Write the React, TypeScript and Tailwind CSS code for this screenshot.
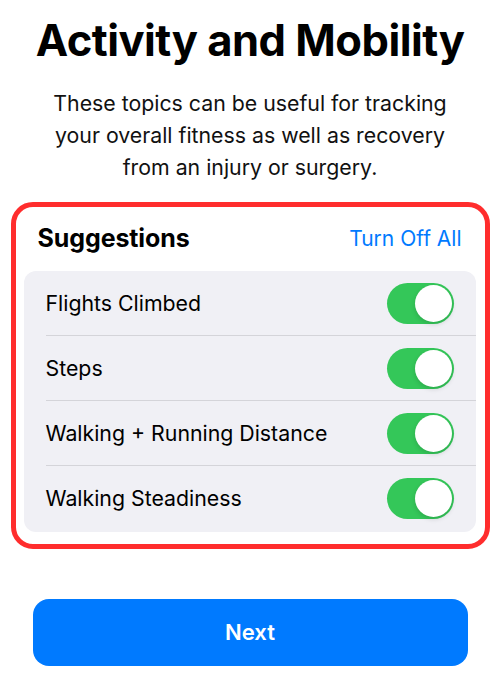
import React from "react";

const topics = [
  "Flights Climbed",
  "Steps",
  "Walking + Running Distance",
  "Walking Steadiness",
];

function Toggle() {
  return (
    <div className="w-[67px] h-[41px] rounded-full bg-[#34c759] flex items-center justify-end pr-[2px]">
      <div className="w-[37px] h-[37px] rounded-full bg-white shadow-[0_2px_5px_rgba(0,0,0,0.15)]" />
    </div>
  );
}

export default function App() {
  return (
    <div
      className="w-[500px] h-[697px] bg-white flex flex-col items-center text-black overflow-hidden"
      style={{ fontFamily: "Inter, 'Noto Sans', sans-serif" }}
    >
      <h1 className="mt-[12px] text-[43.5px] leading-[56px] font-bold tracking-[-0.5px]">
        Activity and Mobility
      </h1>
      <p className="mt-[19px] text-[21.3px] leading-[32px] text-center text-[#111]">
        These topics can be useful for tracking
        <br />
        your overall fitness as well as recovery
        <br />
        from an injury or surgery.
      </p>

      <div className="mt-[19px] w-[479px] border-[5px] border-[#ff2d2d] rounded-[22px] pl-[8px] pr-[9px] pb-[12px]">
        <div className="h-[64px] flex items-center justify-between pl-[14px] pr-[14px]">
          <span className="text-[25px] font-bold tracking-[-0.1px]">Suggestions</span>
          <span className="text-[21px] text-[#007aff]">Turn Off All</span>
        </div>
        <div className="bg-[#f0f0f5] rounded-[12px] pb-[1px]">
          {topics.map((t, i) => (
            <div key={t} className="pl-[22px]">
              <div
                className={
                  "h-[65px] flex items-center justify-between pr-[22px] " +
                  (i < topics.length - 1 ? "border-b border-[#d4d4d9]" : "")
                }
              >
                <span className="text-[21.3px] pt-[1px]">{t}</span>
                <Toggle />
              </div>
            </div>
          ))}
        </div>
      </div>

      <button className="mt-[50px] w-[435px] h-[67px] rounded-[16px] bg-[#007aff] text-white text-[22px] font-semibold">
        Next
      </button>
    </div>
  );
}
